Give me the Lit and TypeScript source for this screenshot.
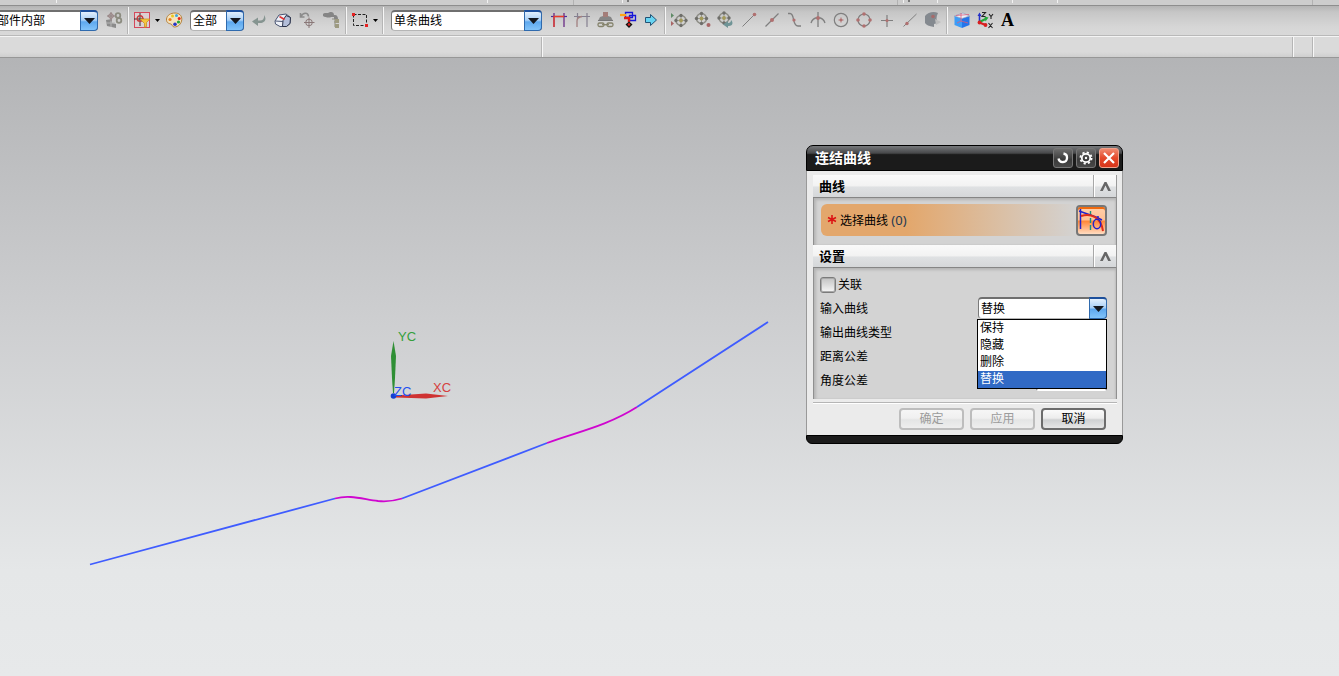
import { LitElement, html, css, svg } from "lit";
import { customElement, property, state } from "lit/decorators.js";
import { classMap } from "lit/directives/class-map.js";

const G = "#7f7f7f";
const R = "#b07070";

const wheel = (x: number, y: number) => svg`
  <circle cx=${x} cy=${y} r="5" fill="none" stroke="#8c8c84" stroke-width="1.4"/>
  <path d="M${x - 6} ${y}h12M${x} ${y - 6}v12" stroke="#9a9a94" stroke-width="1"/>
  <g fill="#6e6e6a"><circle cx=${x} cy=${y - 5} r="1.7"/><circle cx=${x} cy=${y + 5} r="1.7"/>
  <circle cx=${x - 5} cy=${y} r="1.7"/><circle cx=${x + 5} cy=${y} r="1.7"/></g>
  <circle cx=${x} cy=${y} r="1.9" fill="#a39a5a"/>`;

const icons: Record<string, unknown> = {
  assembly: svg`<path d="M1 9l6-1v4l4 1v4l-9-2z" fill="#8b8b8b"/><path d="M1 12h9M6 8v8" stroke="#b5b5b5"/>
    <path d="M6 1v9M2 5h8" stroke="#8b7a7a"/><circle cx="6" cy="5" r="2.3" fill="none" stroke="#957c7c"/>
    <g fill="none" stroke="#8c8c80" stroke-width="1.800"><circle cx="13" cy="4.500" r="2.300"/><circle cx="14" cy="9.500" r="2.300"/></g>`,
  filter: svg`<rect x="1.500" y="1.500" width="15" height="15" fill="#dcd0d2" stroke="#d4495b"/>
    <path d="M1 8h10M7 2v13" stroke="#333"/><circle cx="7" cy="7.500" r="2.800" fill="none" stroke="#c63c3c" stroke-width="1.400"/>
    <path d="M7 8h10l-3.500 3.500v4l-2 1v-4z" fill="#f4c63c" stroke="#c48a1a" stroke-width=".7"/>`,
  palette: svg`<path d="M1.500 8C2 4 6 2 10 2c4 0 7 2.500 6.800 6.500C16.500 13 13 16 9.500 16c-2.500 0-2-2.500-3.500-3C4 12.500 1.200 12 1.500 8z" fill="#f5e3bd" stroke="#b5803a"/>
    <circle cx="5" cy="8.500" r="1.600" fill="#e8801c"/><circle cx="7.500" cy="5" r="1.500" fill="#e9c91e"/><circle cx="11.500" cy="4.500" r="1.500" fill="#3da7e0"/>
    <circle cx="14.200" cy="7.500" r="1.500" fill="#e2241c"/><circle cx="13.500" cy="11" r="1.600" fill="#25a639"/><circle cx="10" cy="13.300" r="1.800" fill="#2434c8"/>`,
  back: svg`<path d="M14 4c3 4 1 8-4 8H8v3L2 10.500 8 6.500v3h2c3 0 4.500-2 4-5.500z" fill="#859490"/>`,
  cubeLoop: svg`<path d="M1 10l4-6 7-1 4.500 3.500-.5 6-3.500 3L6 15.500 1.500 13z" fill="#eef1f8" stroke="#4a5573"/>
    <path d="M9 9.500l3-5 4.500 2-.5 6-3.500 3H8.500z" fill="#b3bed9" stroke="#2b3248"/><path d="M1.500 10l7.500 .5" stroke="#4a5573"/>
    <path d="M5.500 5.500l5 3" stroke="#e23434" stroke-width="1.600"/>`,
  undoPoint: svg`<path d="M2.500 2v4h4M3 5.500C5 1.500 10 1 10.500 5.500" fill="none" stroke="#8b8b8b" stroke-width="1.600"/>
    <circle cx="11" cy="11.500" r="3.300" fill="none" stroke="#8a7878"/><path d="M11 6.500v10.500M6 11.500h10.500" stroke="#8a7878"/>`,
  brush: svg`<path d="M1 3c2-2 4 0 6-1.500 3-1 5 0 5 2.500h1c2 0 3 2 3 4h-4V6H9C8 7 3 6.500 1 5z" fill="#858585"/>
    <path d="M10 8h3v8M12 11h3" stroke="#8d8d80" fill="none"/><path d="M13 8h4v4h-4zM13 13h4v4h-4z" fill="#9d9a80"/>`,
  marquee: svg`<rect x="2.500" y="3.500" width="13" height="11" fill="none" stroke="#222" stroke-dasharray="3 1.500"/>
    <rect x="1" y="2" width="3" height="3" fill="#e52222"/><rect x="14" y="13" width="3" height="3" fill="#e52222"/>`,
  cross: svg`<path d="M1 5.500h16" stroke="#4e2a9a" stroke-width="1.200"/><path d="M4 2v14M14 2v14" stroke="#6a2d86" stroke-width="1.300"/>
    <path d="M4 16V5.500h10" fill="none" stroke="#ea3c28" stroke-width="1.300"/>`,
  fillet: svg`<path d="M1 5.500h16M4.500 2v5M14 2v14" stroke="#858090" stroke-width="1.200"/><path d="M4 16v-6q0-4 5-4.500" fill="none" stroke="#a28080" stroke-width="1.300"/>`,
  stamp: svg`<path d="M7 5h5l3 1 2 4H2l2-4z" fill="#868686"/><path d="M7 1h5v5H7z" fill="#a37d79"/>
    <path d="M2 9.500h15" stroke="#777" stroke-width="1"/><g fill="none" stroke="#85836c" stroke-width="1.300"><rect x="2" y="12" width="6" height="3.500" rx="1.500"/><rect x="11" y="12" width="6" height="3.500" rx="1.500"/><path d="M6 13.700h7"/></g>`,
  chain: svg`<path d="M6.500 1.500h7v5h-7zM10.500 4.500h6v5h-6z" fill="none" stroke="#1616d8" stroke-width="1.300"/><path d="M1 4h6" stroke="#ffa216" stroke-width="2.200"/>
    <path d="M5 7h5v4" fill="none" stroke="#e01818" stroke-width="2.400"/><path d="M10 10.500l3.500 3-3.500 3.500-3.500-3.500z" fill="#111"/><circle cx="10" cy="13.500" r="1.300" fill="#e02020"/>`,
  arrow: svg`<path d="M3.500 6.500h5v-3L14.500 9l-6 5.500v-3h-5z" fill="#67d4f2" stroke="#235274"/>`,
  w1: svg`<path d="M0 2l3 2.500L0 7z" fill="#5e8a66"/><path d="M0 10l3 2.500L0 15z" fill="#a86666"/>${wheel(10, 9.5)}`,
  w2: svg`${wheel(7.5, 7.5)}<circle cx="14.500" cy="14" r="2" fill="#a86666"/>`,
  w3: svg`${wheel(7, 7)}<path d="M14 9c3 3 1 6-2 6h-1v2l-5-3.500L11 10v2c2 0 3-1 3-3z" fill="#6f9496"/>`,
  line: svg`<path d="M2.500 15.500L15 3" stroke=${G}/><circle cx="14.500" cy="3.500" r="1.800" fill=${R}/>`,
  mid: svg`<path d="M2.500 15.500L15.500 2.500" stroke=${G} stroke-width="1.200"/><circle cx="9" cy="9" r="2" fill=${R}/>`,
  spline: svg`<path d="M2 2.500h2c5 0 2 12.500 8 12.500h3" fill="none" stroke=${G} stroke-width="1.300"/><circle cx="8" cy="9" r="1.600" fill=${R}/>`,
  arcCross: svg`<path d="M2 12C4 5 14 5 16 12M9 1v15" fill="none" stroke=${G} stroke-width="1.300"/><circle cx="9" cy="7" r="1.900" fill=${R}/>`,
  center: svg`<circle cx="9" cy="9" r="6.700" fill="none" stroke=${G} stroke-width="1.200"/><path d="M6.500 9h5M9 6.500v5" stroke=${R}/><circle cx="9" cy="9" r="1.300" fill=${R}/>`,
  quadrant: svg`<circle cx="9" cy="9" r="6" fill="none" stroke=${G} stroke-width="1.200"/><g fill=${R}><circle cx="9" cy="3" r="1.800"/><circle cx="9" cy="15" r="1.800"/><circle cx="3" cy="9" r="1.800"/><circle cx="15" cy="9" r="1.800"/></g>`,
  plus: svg`<path d="M3 9.500h12M9 4v12" stroke=${G} stroke-width="1.200"/><circle cx="9" cy="9.500" r="1.500" fill=${R}/>`,
  pointOn: svg`<path d="M2.500 15.500L15.500 3" stroke=${G}/><circle cx="6" cy="12.500" r="1.700" fill=${R}/>`,
  face: svg`<path d="M1 5c3-4 9-5 13-3-2 4-2 7 0 10l-4 1v3c-5-1-8-2-9-4z" fill="#84898f"/><path d="M11 8l6 3-5 3z" fill="#bdbdbd"/><circle cx="9" cy="5.500" r="1.800" fill="#a66b6b"/>`,
  cube: svg`<path d="M1.500 5L9 7.500V17l-7.500-3z" fill="#3c9cf6"/><path d="M9 7.500L16.500 5v9L9 17z" fill="#2474ea"/><path d="M1.500 5L10 2l6.500 3L9 7.500z" fill="#e9f2fb" stroke="#7d91b5" stroke-width=".6"/>
    <path d="M8 2v8l7 2M3 4.500l13-1M8 10l-4 2" stroke="#e05a78" stroke-width=".8" fill="none"/>`,
  csys: svg`<path d="M3.500 12V4" stroke="#2430c8" stroke-width="1.600"/><path d="M1.500 5l2-3.500 2 3.500z" fill="#2430c8"/><path d="M3.500 11l6-3" stroke="#22a83a" stroke-width="2"/><path d="M8.500 5.500l4 1-3 4z" fill="#22a83a"/>
    <path d="M3.500 11.500l6 2.500" stroke="#d82020" stroke-width="2"/><circle cx="3.500" cy="11.500" r="1.900" fill="#d82020"/><circle cx="9.500" cy="14" r="1.900" fill="#d82020"/>
    <path d="M6 1.500h3.500L6 5.500h3.500M13 3l2 2.500L17 3M15 5.500V8M12.500 12l4 5M16.500 12l-4 5" fill="none" stroke="#222" stroke-width="1.100"/>`,
};

const base = css`
  :host {
    font-family: "Liberation Sans", "Noto Sans CJK SC", sans-serif;
    font-size: 12px;
    line-height: 16px;
    color: #000;
  }
  * {
    box-sizing: border-box;
  }
  button,
  select,
  input {
    font: inherit;
    color: inherit;
    margin: 0;
    padding: 0;
  }
`;

@customElement("drop-down")
export class DropDown extends LitElement {
  @property() label = "";
  @property({ type: Array }) options: string[] = [];
  @property() value = "";

  static styles = [
    base,
    css`
      :host {
        display: grid;
        height: 21px;
      }
      .field,
      .arrow {
        grid-area: 1 / 1;
      }
      .field {
        appearance: none;
        width: 100%;
        height: 100%;
        padding: 0 20px 0 2px;
        border: 1px solid #7a7a7a;
        border-top: 2px solid #6f6f6f;
        border-bottom-color: #b5b5b5;
        border-radius: 4px;
        background: #fff;
        outline: none;
        line-height: 16px;
      }
      .arrow {
        justify-self: end;
        width: 18px;
        height: 100%;
        pointer-events: none;
        border: 1px solid #2f6aad;
        border-top: 2px solid #1c4f9c;
        border-radius: 0 4px 4px 0;
        background: linear-gradient(#e3f0fd, #a9d0f6 45%, #5ea8ee 55%, #82c4fa);
        display: grid;
        place-items: center;
      }
    `,
  ];

  render() {
    return html`
      <select class="field" aria-label=${this.label}>
        ${this.options.map((o) => html`<option ?selected=${o === this.value}>${o}</option>`)}
      </select>
      <span class="arrow">
        <svg width="11" height="8" viewBox="0 0 11 8"><path d="M0 1h11L5.500 7z" fill="#14181f"/></svg>
      </span>
    `;
  }
}

@customElement("selection-bar")
export class SelectionBar extends LitElement {
  static styles = [
    base,
    css`
      :host {
        display: flex;
        align-items: center;
        box-sizing: border-box;
        height: 31px;
        padding-bottom: 2px;
        background: linear-gradient(#b4b4b4, #c6c6c6 20%, #d6d6d6 70%, #d9d9d9);
        border-bottom: 1px solid #f4f4f4;
        box-shadow: inset 0 -1px #b9b9b9;
        overflow: hidden;
      }
      .tool {
        flex: none;
        width: 23px;
        height: 24px;
        border: 0;
        background: none;
        display: grid;
        place-items: center;
      }
      .wide {
        width: 24px;
      }
      .split {
        width: 22px;
      }
      .glyph {
        font: bold 18px/20px "Liberation Serif", serif;
      }
      .caret {
        flex: none;
        width: 9px;
        height: 24px;
        border: 0;
        background: none;
        display: grid;
        place-items: center;
      }
      .rule {
        flex: none;
        width: 2px;
        height: 27px;
        margin: 0 2px;
        background: linear-gradient(90deg, #b5b5b5 50%, #f6f6f6 50%);
      }
      .scope {
        flex: none;
        width: 104px;
        margin: 0 4px 0 -6px;
      }
      .detail {
        flex: none;
        width: 54px;
        margin: 0 3px 0 5px;
      }
      .curve {
        flex: none;
        width: 151px;
        margin: 0 5px;
      }
    `,
  ];

  private tool(name: string, size = "") {
    return html`<button class=${classMap({ tool: true, wide: size === "wide", split: size === "split" })} aria-label=${name}>
      <svg width="18" height="18" viewBox="0 0 18 18">${icons[name]}</svg>
    </button>`;
  }

  private caret() {
    return html`<button class="caret" aria-label="more">
      <svg width="5" height="3" viewBox="0 0 5 3"><path d="M0 0h5L2.500 3z"/></svg>
    </button>`;
  }

  render() {
    return html`
      <drop-down class="scope" label="scope" value="部件内部" .options=${["部件内部"]}></drop-down>
      ${this.tool("assembly")}
      <span class="rule"></span>
      ${this.tool("filter", "split")}${this.caret()}${this.tool("palette")}
      <drop-down class="detail" label="filter" value="全部" .options=${["全部"]}></drop-down>
      ${["back", "cubeLoop", "undoPoint", "brush"].map((n) => this.tool(n, "wide"))}
      <span class="rule"></span>
      ${this.tool("marquee", "split")}${this.caret()}
      <span class="rule"></span>
      <drop-down class="curve" label="curve rule" value="单条曲线" .options=${["单条曲线"]}></drop-down>
      ${["cross", "fillet", "stamp", "chain", "arrow"].map((n) => this.tool(n))}
      <span class="rule"></span>
      ${["w1", "w2", "w3", "line", "mid", "spline", "arcCross", "center", "quadrant", "plus", "pointOn", "face"].map((n) => this.tool(n))}
      <span class="rule"></span>
      ${this.tool("cube")}${this.tool("csys")}
      <button class="tool glyph">A</button>
    `;
  }
}

@customElement("join-dialog")
export class JoinDialog extends LitElement {
  @state() private choice = "替换";

  static styles = [
    base,
    css`
      :host {
        display: block;
        width: 317px;
      }
      .title {
        display: flex;
        align-items: center;
        gap: 3px;
        height: 26px;
        padding: 0 3px 0 8px;
        border: 1px solid #000;
        border-radius: 7px 7px 0 0;
        background: linear-gradient(#77797c, #4a4b4d 28%, #3a3b3c 32%, #1b1b1b 36%, #1b1b1b);
        color: #fff;
      }
      .name {
        flex: 1;
        margin: 0;
        font-size: 14px;
        line-height: 20px;
        font-weight: bold;
      }
      .winbtn {
        width: 20px;
        height: 20px;
        border: 1px solid #777;
        border-radius: 3px;
        background: linear-gradient(#6c6c6c, #3b3b3b 60%, #484848);
        display: grid;
        place-items: center;
      }
      .close {
        border-color: #f1a28c;
        background: linear-gradient(#f08a70, #e4492b 50%, #d8351a);
      }
      .body {
        padding: 4px 5px 5px 6px;
        border: solid #999;
        border-width: 0 1px;
        background: #ebebeb;
      }
      .head {
        display: flex;
        height: 23px;
        border-bottom: 1px solid #858585;
        border-right: 1px solid #999;
        background: linear-gradient(#fafafa, #f2f2f2 50%, #dfe1e3 54%, #d5d7d9);
      }
      .caption {
        flex: 1;
        margin: 0;
        padding: 0 6px;
        font-size: 13px;
        line-height: 23px;
        font-weight: bold;
      }
      .fold {
        width: 23px;
        border: 0;
        border-left: 1px solid #a8a8a8;
        background: none;
        box-shadow: inset 1px 0 #fff;
        display: grid;
        place-items: center;
      }
      .group {
        padding: 6px 9px 9px 7px;
        border: solid #909090;
        border-width: 0 1px;
        background: #d3d3d3;
        box-shadow: inset 2px 2px 3px #b5b5b5, inset -1px 0 2px #bdbdbd;
      }
      .pick {
        display: flex;
        align-items: center;
        height: 32px;
        padding-left: 6px;
        border-radius: 6px;
        background: linear-gradient(90deg, #e3a76c, #e3a76c 30%, #d3d3d3 90%);
      }
      .star {
        width: 13px;
        height: 12px;
      }
      .prompt {
        flex: 1;
      }
      .count {
        font-family: "Noto Sans", sans-serif;
        font-size: 13px;
        color: #1f3a52;
      }
      .curvebtn {
        width: 31px;
        height: 31px;
        border: 2px solid #777;
        border-radius: 4px;
        background: linear-gradient(#ffd0ab, #ffc093 48%, #ff8636 52%, #ffdcc2);
        box-shadow: inset 0 2px #f06a10;
        display: grid;
        place-items: center;
      }
      .settings {
        padding: 5px 9px 6px 6px;
      }
      .row {
        display: flex;
        align-items: center;
        height: 24px;
      }
      .text {
        flex: 1;
      }
      .tick {
        appearance: none;
        width: 16px;
        height: 16px;
        margin-right: 2px;
        border: 1px solid #7b7b7b;
        border-radius: 3px;
        background: linear-gradient(#c3c3c3, #f6f6f6);
        box-shadow: inset 0 0 0 1px #a9a9a9;
      }
      .combo {
        position: relative;
        align-self: flex-start;
        width: 129px;
      }
      .combobox {
        height: 22px;
      }
      .list {
        position: absolute;
        z-index: 1;
        top: 22px;
        left: -1px;
        right: 0;
        margin: 0;
        padding: 0;
        list-style: none;
        border: 1px solid #000;
        background: #fff;
      }
      .item {
        height: 17px;
        padding-left: 2px;
        line-height: 17px;
      }
      .on {
        background: #316ac5;
        color: #fff;
      }
      .num {
        width: 71px;
        height: 20px;
        border: 1px solid #777;
        border-bottom-color: #fff;
        border-radius: 3px;
      }
      .foot {
        display: flex;
        justify-content: flex-end;
        gap: 6px;
        margin-top: 3px;
        padding: 5px 11px 0;
        border-top: 1px solid #b5b5b5;
        box-shadow: inset 0 1px #fff;
      }
      .action {
        width: 65px;
        height: 22px;
        border: 2px solid #6c6c6c;
        border-radius: 4px;
        background: linear-gradient(#fafafa, #ededed 45%, #cfd1d2 55%, #e6e6e6);
        line-height: 16px;
      }
      .action:disabled {
        border-color: #bdbdbd;
        color: #9c9c9c;
        background: linear-gradient(#f6f6f6, #f0f0f0 45%, #e4e5e5 55%, #eee);
      }
      .base {
        height: 9px;
        border: 1px solid #000;
        border-radius: 0 0 6px 6px;
        background: #1b1b1b;
      }
    `,
  ];

  private head(text: string) {
    return html`<header class="head">
      <h3 class="caption">${text}</h3>
      <button class="fold" aria-label=${text}>
        <svg width="13" height="11" viewBox="0 0 13 11"><path d="M1 10L5.500 1h2L12 10H9.200L6.500 4.500 3.800 10z" fill="#666"/></svg>
      </button>
    </header>`;
  }

  render() {
    return html`
      <header class="title">
        <h2 class="name">连结曲线</h2>
        <button class="winbtn" aria-label="reset">
          <svg width="14" height="14" viewBox="0 0 14 14"><path d="M7.500 2.500A4.300 4.300 0 1 1 2.500 7.500" fill="none" stroke="#fff" stroke-width="2.300"/></svg>
        </button>
        <button class="winbtn" aria-label="options">
          <svg width="16" height="16" viewBox="0 0 16 16"><circle cx="8" cy="8" r="5.600" fill="none" stroke="#fff" stroke-width="1.800" stroke-dasharray="2.200 2.200"/><circle cx="8" cy="8" r="4.200" fill="none" stroke="#fff" stroke-width="1.800"/><circle cx="8" cy="8" r="1.200" fill="#fff"/></svg>
        </button>
        <button class="winbtn close" aria-label="close">
          <svg width="14" height="14" viewBox="0 0 14 14"><path d="M2 2l10 10M12 2L2 12" stroke="#fff" stroke-width="2.200"/></svg>
        </button>
      </header>
      <div class="body">
        ${this.head("曲线")}
        <div class="group">
          <div class="pick">
            <svg class="star" viewBox="0 0 13 12"><path d="M5 1v9M1 3.500l8 4M9 3.500l-8 4" stroke="#dc1414" stroke-width="1.600"/></svg>
            <span class="prompt">选择曲线 <span class="count">(0)</span></span>
            <button class="curvebtn" aria-label="选择曲线">
              <svg width="27" height="27" viewBox="0 0 27 27">
                <path d="M2.500 2v20" stroke="#2222cc" stroke-width="1.500"/><path d="M12.500 4v21" stroke="#159080" stroke-width="1.400" stroke-dasharray="5 2"/>
                <path d="M1 4l17 6 6 3M20 9v4" fill="none" stroke="#2222cc" stroke-width="1.500"/>
                <path d="M3 9c10-3 20 1 22 15" fill="none" stroke="#e02c18" stroke-width="2"/>
                <ellipse cx="19" cy="17" rx="3.700" ry="4.800" fill="none" stroke="#2222cc" stroke-width="1.500"/>
              </svg>
            </button>
          </div>
        </div>
        ${this.head("设置")}
        <div class="group settings">
          <div class="row"><input class="tick" type="checkbox" id="assoc" /><label for="assoc">关联</label></div>
          <div class="row">
            <span class="text">输入曲线</span>
            <div class="combo">
              <drop-down class="combobox" label="输入曲线" .value=${this.choice} .options=${["保持", "隐藏", "删除", "替换"]}></drop-down>
              <ul class="list" role="listbox" aria-label="输入曲线">
                ${["保持", "隐藏", "删除", "替换"].map(
                  (o) => html`<li
                    class=${classMap({ item: true, on: o === this.choice })}
                    role="option"
                    aria-selected=${o === this.choice}
                    @click=${() => (this.choice = o)}
                  >${o}</li>`
                )}
              </ul>
            </div>
          </div>
          <div class="row"><span class="text">输出曲线类型</span></div>
          <div class="row"><label class="text" for="dist">距离公差</label><input class="num" id="dist" /></div>
          <div class="row"><label class="text" for="angle">角度公差</label><input class="num" id="angle" /></div>
        </div>
        <footer class="foot">
          <button class="action" disabled>确定</button>
          <button class="action" disabled>应用</button>
          <button class="action">取消</button>
        </footer>
      </div>
      <div class="base"></div>
    `;
  }
}

@customElement("app-root")
export class AppRoot extends LitElement {
  static styles = [
    base,
    css`
      :host {
        display: flex;
        flex-direction: column;
        height: 100vh;
        overflow: hidden;
      }
      .edge {
        flex: none;
        height: 6px;
        border-bottom: 1px solid #8e8e8e;
        background: #cdcdcd;
      }
      .marks {
        display: block;
        width: 100%;
        height: 5px;
      }
      .status {
        flex: none;
        display: flex;
        height: 21px;
        border-bottom: 1px solid #979797;
        background: linear-gradient(#dadada 75%, #cfcfcf);
      }
      .cell {
        width: 20px;
        border-right: 1px solid #b5b5b5;
        box-shadow: 1px 0 #f7f7f7;
      }
      .cue {
        width: 542px;
      }
      .message {
        flex: 1;
      }
      .grip {
        width: 26px;
      }
      .view {
        position: relative;
        flex: 1;
        background: linear-gradient(#b3b4b6, #cdced0 42%, #e5e7e8 83%, #e7e9ea);
      }
      .scene {
        display: block;
        width: 100%;
        height: 100%;
      }
      .axis {
        font-size: 13px;
      }
      .window {
        position: absolute;
        left: 806px;
        top: 87px;
      }
    `,
  ];

  render() {
    return html`
      <div class="edge">
        <svg class="marks">
          <g fill="#f2f2f2">${[56, 487, 622, 903, 937, 1012, 1057].map((x) => svg`<rect x=${x} width="1" height="3"/>`)}</g>
          <g fill="#b2b2b2">${[573, 897, 1312].map((x) => svg`<rect x=${x} width="1" height="5"/>`)}</g>
          <g fill="#777">${[627, 908].map((x) => svg`<rect x=${x} width="2" height="2"/>`)}</g>
        </svg>
      </div>
      <selection-bar></selection-bar>
      <div class="status">
        <div class="cell cue"></div>
        <div class="cell message"></div>
        <div class="cell"></div>
        <div class="grip"></div>
      </div>
      <main class="view">
        <svg class="scene">
          <g transform="translate(0 -58)" fill="none" stroke-width="1.800">
            <path d="M90 564.500L335 498.500M402 498.500L547 443M637 407L768 322" stroke="#3f5cff"/>
            <path d="M335 498.500C350 494.500 362 499 378 501C388 502 394 501 402 498.500M547 443C577 432 607 426 637 407" stroke="#cf06cf"/>
            <path d="M393.500 341l2.500 15-1 22-1 15h-1l-1-15-1-22z" fill="#2f8f35"/>
            <path d="M396 395.500l30-2 22 2.500-22 2.500-30-1z" fill="#cf3232"/>
            <circle cx="393.500" cy="396" r="2.800" fill="#1440d0"/>
          </g>
          <g class="axis">
            <text x="398" y="283" fill="#35a03c">YC</text>
            <text x="433" y="334" fill="#d64040">XC</text>
            <text x="394" y="338" fill="#2450f0">ZC</text>
          </g>
        </svg>
        <join-dialog class="window"></join-dialog>
      </main>
    `;
  }
}
